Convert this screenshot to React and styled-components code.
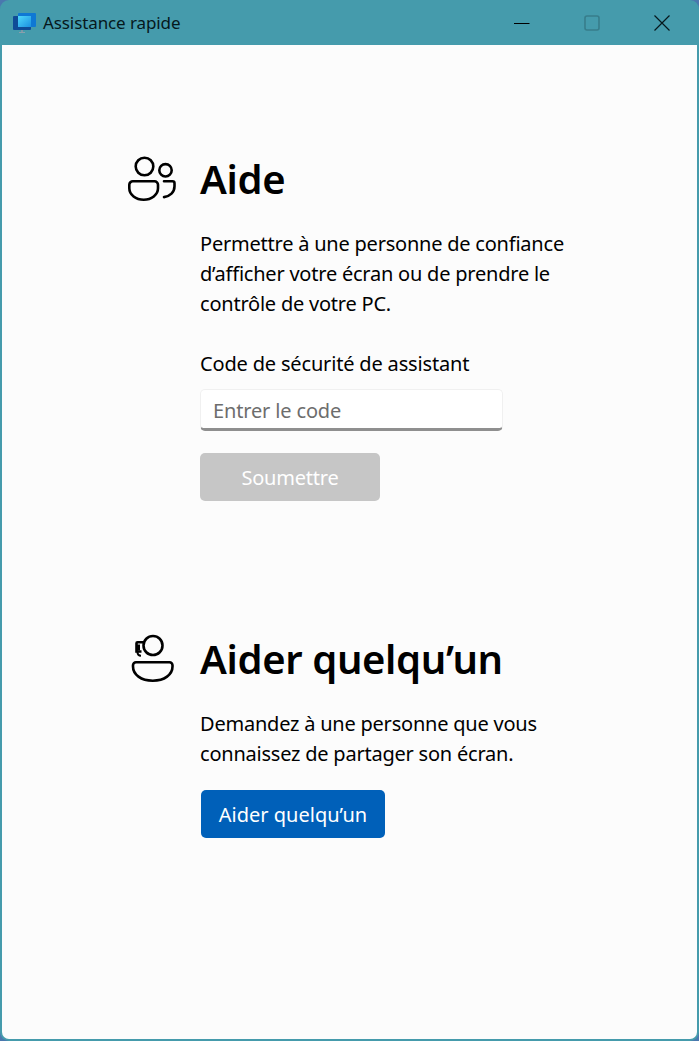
import React from "react";
import styled, { createGlobalStyle } from "styled-components";

const Global = createGlobalStyle`
  html, body { margin: 0; padding: 0; background: #4a78ae; }
  #root { width: 699px; height: 1041px; overflow: hidden; }
  * { box-sizing: border-box; }
`;
const Win = styled.div`
  width: 699px; height: 1041px; background: #459bac; border-radius: 9px;
  display: flex; flex-direction: column; padding: 0 2px 2px;
  font-family: "Noto Sans", "Open Sans", sans-serif; color: #000;
`;
const TitleBar = styled.header`
  height: 45px; flex: none; display: flex; align-items: center; padding: 0 2px 0 11px; margin: 0 -2px;
`;
const Logo = styled.svg`width: 26px; height: 22px; flex: none; margin-right: 6px;`;
const TitleText = styled.span`
  font-size: 17px; color: #06181c; letter-spacing: -0.1px; flex: 1; margin-top: -1px;
`;
const Ctl = styled.button`
  width: 70px; height: 45px; padding: 0; border: 0; background: none; display: flex;
  align-items: center; justify-content: center;
`;
const Body = styled.main`
  flex: 1; background: #fcfcfc; border-radius: 0 0 7px 7px; padding: 105px 0 0 126px;
  display: flex; flex-direction: column; gap: 129px;
`;
const Section = styled.section`
  display: grid; grid-template-columns: 72px 1fr; align-items: start;
`;
const IconCell = styled.div`height: 56px; display: flex; align-items: center;`;
const Heading = styled.h2`
  margin: 0; height: 56px; line-height: 58px; font-size: 40px; font-weight: 600; letter-spacing: -0.36px;
`;
const Content = styled.div`grid-column: 2; display: flex; flex-direction: column; align-items: flex-start;`;
const Para = styled.p`
  margin: 23px 0 0; font-size: 20px; line-height: 30px; letter-spacing: -0.22px; width: 400px;
`;
const Label = styled.label`
  margin-top: 30px; font-size: 20px; line-height: 30px; letter-spacing: -0.17px;
`;
const Input = styled.input`
  margin-top: 10px; width: 303px; height: 42px; background: #fff; padding: 2px 12px 0 12px;
  border: 1px solid #f0f0f0; border-bottom: 3px solid #8f8f8f; border-radius: 5px;
  font: 20px "Noto Sans", sans-serif; letter-spacing: -0.15px; outline: none;
  &::placeholder { color: #6d6d6d; opacity: 1; }
`;
const Button = styled.button`
  height: 48px; border: 0; border-radius: 5px; color: #fff; font: 20px "Noto Sans", sans-serif;
  padding: 0;
  width: ${p => p.$w}px; margin: ${p => p.$m};
  letter-spacing: ${p => p.$primary ? "0" : "-0.2px"};
  background: ${p => p.$primary ? "#0060b9" : "#c6c6c6"};
`;

export default function App() {
  return (
    <Win>
      <Global />
      <TitleBar>
        <Logo viewBox="0 0 26 22">
          <defs>
            <linearGradient id="scr" x1="0" y1="0" x2="1" y2="1">
              <stop offset="0" stopColor="#4fd8fb" />
              <stop offset="1" stopColor="#1b8fe0" />
            </linearGradient>
          </defs>
          <rect x="2" y="4" width="18" height="14" rx="1" fill="#0f4c97" />
          <rect x="7" y="1" width="18" height="14" rx="1" fill="#0f78d4" />
          <rect x="7" y="4" width="13" height="11" fill="url(#scr)" />
          <rect x="10" y="18" width="2" height="2" fill="#7d98a8" />
          <rect x="8" y="20" width="6" height="1" fill="#8aa0ac" />
        </Logo>
        <TitleText>Assistance rapide</TitleText>
        <Ctl aria-label="Réduire">
          <svg width="16" height="16"><path d="M0 8.500h15.500" stroke="#000" fill="none" /></svg>
        </Ctl>
        <Ctl aria-label="Agrandir">
          <svg width="16" height="16"><rect x="1" y="1" width="14" height="14" rx="2" fill="none" stroke="#377d8b" strokeWidth="1.6" /></svg>
        </Ctl>
        <Ctl aria-label="Fermer">
          <svg width="16" height="16"><path d="M.5.5l15 15M15.500.5l-15 15" stroke="#06181c" strokeWidth="1.2" fill="none" /></svg>
        </Ctl>
      </TitleBar>
      <Body>
        <Section>
          <IconCell>
            <svg width="50" height="48" viewBox="0 0 50 48" fill="none" stroke="#000" strokeWidth="2.6">
              <circle cx="16.500" cy="12.500" r="8.800" />
              <circle cx="37.500" cy="16.300" r="6.200" />
              <path d="M5 27.300h21.500a3.500 3.500 0 0 1 3.500 3.500v3.500c0 6.500-6.500 11.500-14.300 11.500S1.300 40.800 1.300 34.300v-3.500a3.500 3.500 0 0 1 3.700-3.500z" />
              <path d="M36 27.300h8.500a2 2 0 0 1 2 2v3c0 6-4.500 10-10.500 10.800" strokeLinecap="round" />
            </svg>
          </IconCell>
          <Heading>Aide</Heading>
          <Content>
            <Para>Permettre à une personne de confiance d’afficher votre écran ou de prendre le contrôle de votre PC.</Para>
            <Label>Code de sécurité de assistant</Label>
            <Input placeholder="Entrer le code" />
            <Button $w={180} $m="22px 0 0">Soumettre</Button>
          </Content>
        </Section>
        <Section>
          <IconCell>
            <svg width="50" height="48" viewBox="0 0 50 48" fill="none" stroke="#000" strokeWidth="2.6">
              <circle cx="25" cy="11.500" r="9.500" />
              <path d="M15.500 8.300H9.500a1 1 0 0 0-1 1V17.500h5" />
              <path d="M8.500 10.500h3.500V16.500H8.500z" fill="#000" stroke="none" />
              <path d="M9.500 18c0 3 1.500 3.800 3.500 3.800" strokeWidth="2" />
              <path d="M8 28.300h33.500a3 3 0 0 1 3 3v1.200c0 8-8 14.200-19.750 14.200S5 40.500 5 32.500v-1.200a3 3 0 0 1 3-3z" />
            </svg>
          </IconCell>
          <Heading>Aider quelqu’un</Heading>
          <Content>
            <Para>Demandez à une personne que vous connaissez de partager son écran.</Para>
            <Button $primary $w={184} $m="21px 0 0 1px">Aider quelqu’un</Button>
          </Content>
        </Section>
      </Body>
    </Win>
  );
}
